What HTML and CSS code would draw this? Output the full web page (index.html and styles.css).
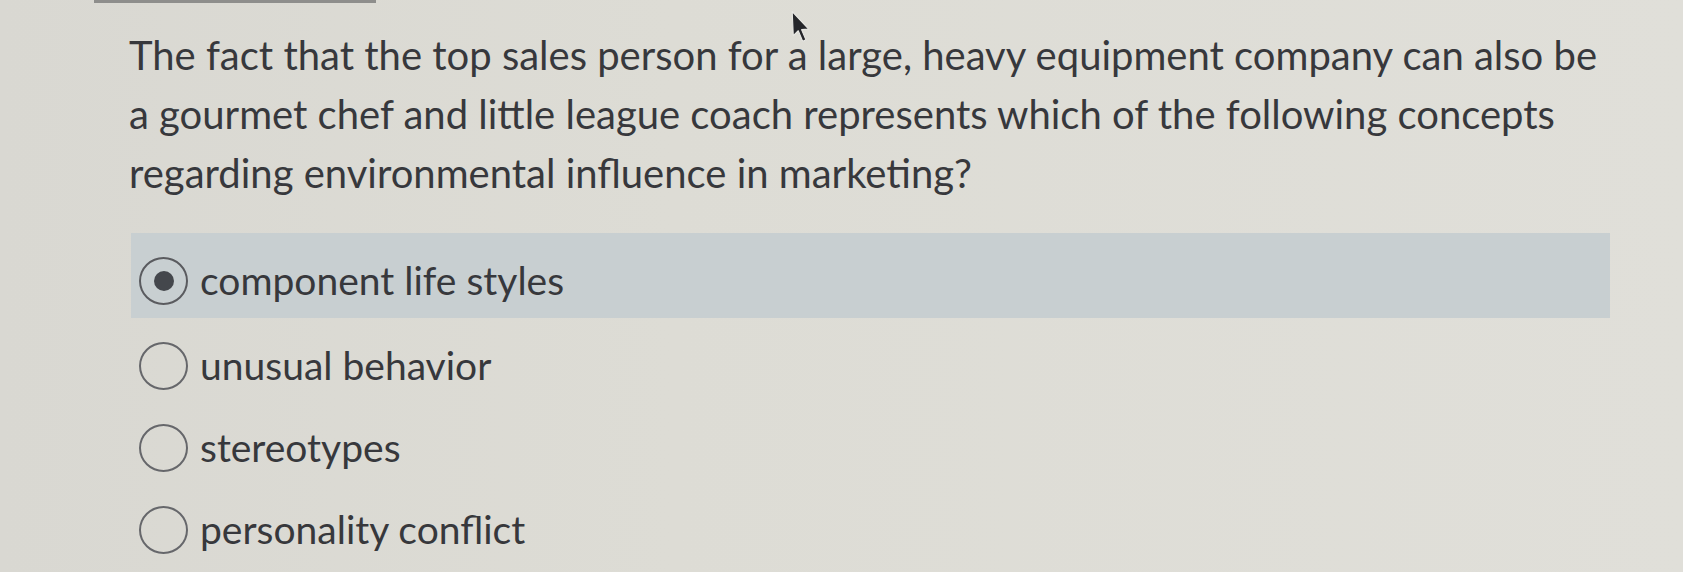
FILE: index.html
```html
<!DOCTYPE html>
<html>
<head>
<meta charset="utf-8">
<link rel="stylesheet" href="styles.css">
</head>
<body>
<div class="topbar"></div>
<main class="page">
  <p class="question">The fact that the top sales person for a large, heavy equipment company can also be a gourmet chef and little league coach represents which of the following concepts regarding environmental influence in marketing?</p>
  <div class="options">
    <label class="option selected"><span class="radio"><span class="dot"></span></span><span class="text">component life styles</span></label>
    <label class="option"><span class="radio"></span><span class="text">unusual behavior</span></label>
    <label class="option"><span class="radio"></span><span class="text">stereotypes</span></label>
    <label class="option"><span class="radio"></span><span class="text">personality conflict</span></label>
  </div>
</main>
<svg class="cursor" width="22" height="36" viewBox="0 0 20 32"><path d="M2 1 L3 23 L7.5 18.5 L11.5 28 L14.5 26.8 L10.5 17.5 L17 17 Z" fill="#25262a" stroke="#e8e8e4" stroke-width="1" stroke-linejoin="round"/></svg>
</body>
</html>
```
FILE: styles.css
```css
html, body {
  margin: 0;
  padding: 0;
}
body {
  width: 1683px;
  height: 572px;
  overflow: hidden;
  background: linear-gradient(90deg, #d9d8d2 0%, #dddcd5 40%, #e0dfd9 100%);
  font-family: Lato, "Open Sans", sans-serif;
  color: #37383c;
  position: relative;
}
.topbar {
  margin-left: 94px;
  width: 282px;
  height: 3px;
  background: #8e8e8c;
}
.page {
  padding: 23px 73px 0 129px;
}
.question {
  margin: 0;
  font-size: 40px;
  line-height: 59px;
}
.options {
  margin-top: 30px;
  display: flex;
  flex-direction: column;
}
.option {
  display: flex;
  align-items: flex-start;
  height: 82px;
  padding-left: 8px;
  margin-left: 2px;
  font-size: 39px;
  line-height: 47px;
}
.option.selected {
  background: #c8cfd1;
  height: 85px;
}
.radio {
  width: 49px;
  height: 48px;
  margin-top: 24px;
  border: 2px solid #66676b;
  border-radius: 50%;
  box-sizing: border-box;
  display: flex;
  align-items: center;
  justify-content: center;
  margin-right: 12px;
  flex-shrink: 0;
}
.selected .radio {
  border-color: #5a5b5f;
}
.dot {
  width: 20px;
  height: 20px;
  border-radius: 50%;
  background: #44474c;
}
.text {
  margin-top: 24px;
}
.cursor {
  position: absolute;
  left: 790px;
  top: 10px;
}
```
